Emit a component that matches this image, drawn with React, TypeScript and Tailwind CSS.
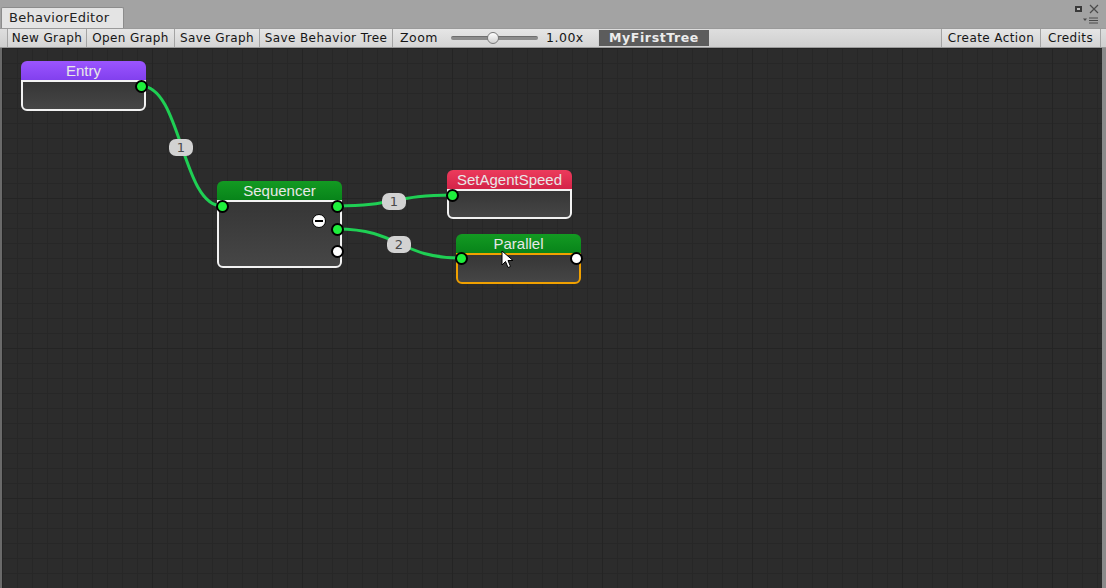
import React from 'react';

type Port = { x: number; y: number; filled?: boolean };

interface NodeProps {
  title: string;
  x: number;
  y: number;
  bodyH: number;
  headerClass: string;
  borderClass: string;
}

const ui = { fontFamily: '"DejaVu Sans", "Liberation Sans", sans-serif' };
const nodeFont = { fontFamily: '"Liberation Sans", Arial, sans-serif' };

const GraphNode: React.FC<NodeProps> = ({ title, x, y, bodyH, headerClass, borderClass }) => (
  <div className="absolute w-[125px]" style={{ left: x, top: y }}>
    <div
      className={`h-[19px] rounded-t-[6px] flex items-center justify-center text-[15px] leading-none text-[#e8e8e8] ${headerClass}`}
      style={nodeFont}
    >
      {title}
    </div>
    <div
      className={`border-2 rounded-b-[6px] bg-[linear-gradient(#363636,#464646)] ${borderClass}`}
      style={{ height: bodyH }}
    />
  </div>
);

const PortDot: React.FC<Port> = ({ x, y, filled = true }) => (
  <div
    className={`absolute w-[13px] h-[13px] rounded-full border-[2px] border-black ${filled ? 'bg-[#1ef03c]' : 'bg-white'}`}
    style={{ left: x - 6.5, top: y - 6.5 }}
  />
);

const LinkLabel: React.FC<{ x: number; y: number; text: string }> = ({ x, y, text }) => (
  <div
    className="absolute w-[24px] h-[17px] rounded-[7px] bg-[#d2d2d2] flex items-center justify-center text-[13px] leading-none text-[#4a4a4a]"
    style={{ left: x - 12, top: y - 8.5, ...ui }}
  >
    {text}
  </div>
);

const ToolButton: React.FC<{ label: string; w: string }> = ({ label, w }) => (
  <div className={`h-full ${w} flex items-center justify-center border-r border-[#a4a4a4] bg-[linear-gradient(#e6e6e6,#d4d4d4)] text-[12px] text-[#151515] tracking-[0.4px]`}>
    {label}
  </div>
);

function curve(x1: number, y1: number, x2: number, y2: number) {
  const dx = Math.max(40, Math.abs(x2 - x1) * 0.5);
  return `M${x1} ${y1} C${x1 + dx} ${y1} ${x2 - dx} ${y2} ${x2} ${y2}`;
}

export default function App() {
  return (
    <div className="w-[1106px] h-[588px] flex flex-col bg-[#a3a3a3] overflow-hidden select-none" style={ui}>
      {/* title strip with tab */}
      <div className="h-[28px] flex items-end relative shrink-0">
        <div className="ml-[1px] h-[21px] w-[123px] bg-[#e4e4e4] rounded-t-[2px] border border-b-0 border-[#8c8c8c] flex items-center pl-[7px] text-[13px] tracking-[0.3px] text-[#222]">
          BehaviorEditor
        </div>
        <div className="absolute right-[7px] top-[4px] flex flex-col items-end gap-[3px]">
          <div className="flex items-center gap-[7px]">
            <div className="w-[7px] h-[6px] bg-[#3a3a3a] flex items-center justify-center">
              <div className="w-[3px] h-[2px] bg-[#bcbcbc]" />
            </div>
            <svg width="10" height="10" viewBox="0 0 10 10">
              <path d="M1 1 L9 9 M9 1 L1 9" stroke="#4a4a4a" strokeWidth="1.2" />
            </svg>
          </div>
          <svg width="16" height="7" viewBox="0 0 16 7">
            <path d="M0 1.5 L4 1.5 L2 4 Z" fill="#4a4a4a" />
            <path d="M6 1 H15 M6 3.5 H15 M6 6 H15" stroke="#4a4a4a" strokeWidth="1" />
          </svg>
        </div>
      </div>

      {/* toolbar */}
      <div className="h-[20px] flex items-stretch bg-[linear-gradient(#dedede,#cfcfcf)] border-y border-[#9a9a9a] shrink-0">
        <div className="w-[8px] border-r border-[#a4a4a4]" />
        <ToolButton label="New Graph" w="w-[79px]" />
        <ToolButton label="Open Graph" w="w-[88px]" />
        <ToolButton label="Save Graph" w="w-[85px]" />
        <ToolButton label="Save Behavior Tree" w="w-[133px]" />
        <div className="w-[205px] flex items-center pl-[7px] text-[12.5px] text-[#151515] tracking-[0.5px] bg-[linear-gradient(#e6e6e6,#d4d4d4)]">
          <span className="w-[44px]">Zoom</span>
          <div className="relative ml-[7px] w-[87px] h-[4px] rounded-full bg-[#8c8c8c] border-t border-[#6e6e6e]">
            <div className="absolute left-[36px] top-[-5px] w-[12px] h-[12px] rounded-full bg-[linear-gradient(#ffffff,#d0d0d0)] border border-[#7a7a7a]" />
          </div>
          <span className="ml-[8px]">1.00x</span>
        </div>
        <div className="ml-[1px] w-[110px] my-[1px] bg-[#5c5c5c] flex items-center justify-center text-[12.5px] font-bold text-[#ececec] tracking-[0.6px]">
          MyFirstTree
        </div>
        <div className="flex-1 border-r border-[#a4a4a4]" />
        <ToolButton label="Create Action" w="w-[99px]" />
        <ToolButton label="Credits" w="w-[60px]" />
        <div className="w-[5px]" />
      </div>

      {/* canvas */}
      <div
        className="relative flex-1 border-l-2 border-l-[#6a6a6a] border-r-4 border-r-[#8a8a8a] bg-[#2c2c2c] bg-[linear-gradient(to_right,#242424_1px,transparent_1px),linear-gradient(to_bottom,#242424_1px,transparent_1px),linear-gradient(to_right,#272727_1px,transparent_1px),linear-gradient(to_bottom,#272727_1px,transparent_1px)] bg-[length:150px_150px,150px_150px,15px_15px,15px_15px]"
      >
        <svg className="absolute inset-0" width="1100" height="540">
          <g stroke="#1fcf54" strokeWidth="3" fill="none" strokeLinecap="round">
            <path d={curve(139, 38, 220, 158)} />
            <path d={curve(335, 158, 450, 147)} />
            <path d={curve(335, 181, 459, 210)} />
          </g>
        </svg>

        <GraphNode title="Entry" x={19} y={13} bodyH={31} headerClass="bg-[linear-gradient(#9b55ff,#8240ee)]" borderClass="border-[#f2f2f2]" />
        <GraphNode title="Sequencer" x={215} y={133} bodyH={68} headerClass="bg-[linear-gradient(#139a22,#08841a)]" borderClass="border-[#f2f2f2]" />
        <GraphNode title="SetAgentSpeed" x={445} y={122} bodyH={30} headerClass="bg-[linear-gradient(#ec3b5c,#d42448)]" borderClass="border-[#f2f2f2]" />
        <GraphNode title="Parallel" x={454} y={186} bodyH={31} headerClass="bg-[linear-gradient(#139a22,#08841a)]" borderClass="border-[#f0a000]" />

        <PortDot x={139} y={38} />
        <PortDot x={220} y={158} />
        <PortDot x={335} y={158} />
        <PortDot x={335} y={181} />
        <PortDot x={335} y={203} filled={false} />
        <PortDot x={450} y={147} />
        <PortDot x={459} y={210} />
        <PortDot x={574} y={210} filled={false} />

        {/* remove-output button */}
        <div className="absolute left-[310px] top-[166px] w-[14px] h-[14px] rounded-full bg-white border border-black flex items-center justify-center">
          <div className="w-[8px] h-[2.5px] bg-black" />
        </div>

        <LinkLabel x={179} y={99} text="1" />
        <LinkLabel x={392} y={153} text="1" />
        <LinkLabel x={397} y={196} text="2" />

        {/* mouse cursor */}
        <svg className="absolute left-[499px] top-[202px]" width="14" height="20" viewBox="0 0 14 20">
          <path d="M1 1 L1 15 L4.5 11.5 L7 17.5 L9.5 16.5 L7 10.5 L12 10.5 Z" fill="white" stroke="black" strokeWidth="1" strokeLinejoin="round" />
        </svg>
      </div>
    </div>
  );
}
